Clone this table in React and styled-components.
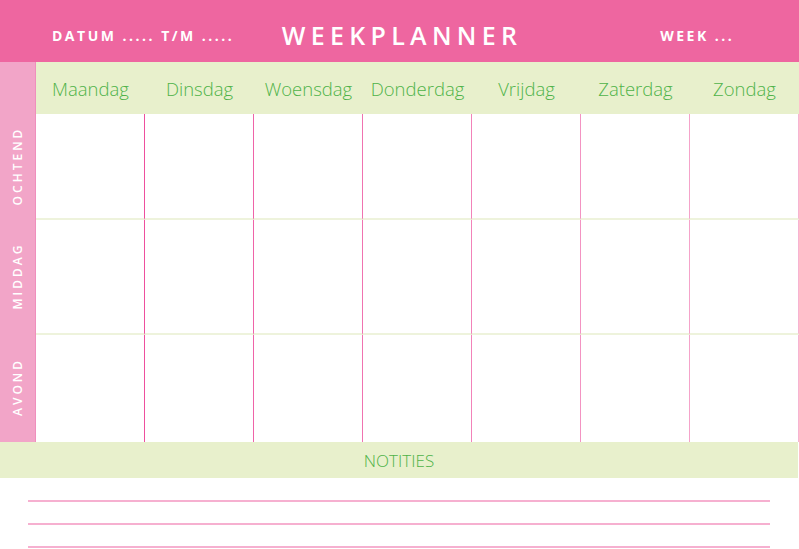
import React from "react"
import styled, { createGlobalStyle } from "styled-components"

const GlobalStyle = createGlobalStyle`
  html, body {
    margin: 0;
    padding: 0;
    background: #ffffff;
  }
  body {
    font-family: "Open Sans", Lato, sans-serif;
  }
`

const days = [
  "Maandag",
  "Dinsdag",
  "Woensdag",
  "Donderdag",
  "Vrijdag",
  "Zaterdag",
  "Zondag",
]

const parts = [
  { name: "OCHTEND", height: 106 },
  { name: "MIDDAG", height: 115 },
  { name: "AVOND", height: 107 },
]

// column lines fade from hot pink to soft pink towards the right
const lineColors = [
  "#ee4f9d",
  "#ef63a8",
  "#f073b0",
  "#f283b9",
  "#f393c2",
  "#f5a3ca",
  "#f7b3d2",
]

const App = () => {
  return (
    <>
      <GlobalStyle />
      <Sheet>
        <Header>
          <Meta $pad={52}>DATUM ..... T/M .....</Meta>
          <Title>WEEKPLANNER</Title>
          <Meta $pad={143}>WEEK ...</Meta>
        </Header>
        <Planner>
          <SideCell />
          {days.map((day) => (
            <DayCell key={day}>{day}</DayCell>
          ))}
          {parts.map((part, row) => (
            <React.Fragment key={part.name}>
              <SideCell $h={part.height}>
                <SideLabel>{part.name}</SideLabel>
              </SideCell>
              {days.map((day, col) => (
                <Slot
                  key={day}
                  $h={part.height}
                  $line={lineColors[col]}
                  $last={row === parts.length - 1}
                />
              ))}
            </React.Fragment>
          ))}
        </Planner>
        <NotesBar>NOTITIES</NotesBar>
        <NoteLines>
          <NoteLine />
          <NoteLine />
          <NoteLine />
        </NoteLines>
      </Sheet>
    </>
  )
}

const Sheet = styled.div`
  width: 799px;
  height: 549px;
  overflow: hidden;
  background: #ffffff;
`

const Header = styled.header`
  height: 62px;
  background: #ee66a0;
  display: grid;
  grid-template-columns: 1fr auto 1fr;
  align-items: center;
  color: #ffffff;
  padding-top: 7px;
  box-sizing: border-box;
`

const Meta = styled.span`
  font-size: 14px;
  font-weight: 700;
  letter-spacing: 2.5px;
  white-space: nowrap;
  padding-left: ${(p) => p.$pad}px;
  padding-top: 2px;
`

const Title = styled.h1`
  margin: 0;
  font-size: 25px;
  font-weight: 600;
  letter-spacing: 5.3px;
  margin-right: -5px;
`

const Planner = styled.div`
  display: grid;
  grid-template-columns: 36px repeat(7, 1fr);
  grid-template-rows: 52px auto auto auto;
`

const SideCell = styled.div`
  background: #f2a5c8;
  border-right: 1px solid #ef8fbd;
  height: ${(p) => (p.$h ? `${p.$h}px` : "52px")};
  display: flex;
  align-items: center;
  justify-content: center;
  box-sizing: border-box;
`

const SideLabel = styled.span`
  transform: rotate(-90deg);
  white-space: nowrap;
  font-size: 12px;
  font-weight: 600;
  letter-spacing: 3px;
  color: #ffffff;
  padding-left: 3px;
`

const DayCell = styled.div`
  background: #e8f0cc;
  color: #4fb349;
  font-size: 18.5px;
  font-weight: 300;
  display: flex;
  align-items: center;
  justify-content: center;
  white-space: nowrap;
`

const Slot = styled.div`
  height: ${(p) => p.$h}px;
  border-right: 1px solid ${(p) => p.$line};
  border-bottom: ${(p) => (p.$last ? "none" : "2px solid #eef3dc")};
  box-sizing: border-box;
`

const NotesBar = styled.div`
  width: 798px;
  height: 36px;
  background: #e8f0cc;
  color: #4fb349;
  font-size: 17px;
  font-weight: 300;
  display: flex;
  align-items: center;
  justify-content: center;
`

const NoteLines = styled.div`
  display: flex;
  flex-direction: column;
  gap: 21px;
  padding: 22px 29px 0 28px;
`

const NoteLine = styled.div`
  height: 2px;
  width: 742px;
  background: #f6b0d0;
`

export default App
